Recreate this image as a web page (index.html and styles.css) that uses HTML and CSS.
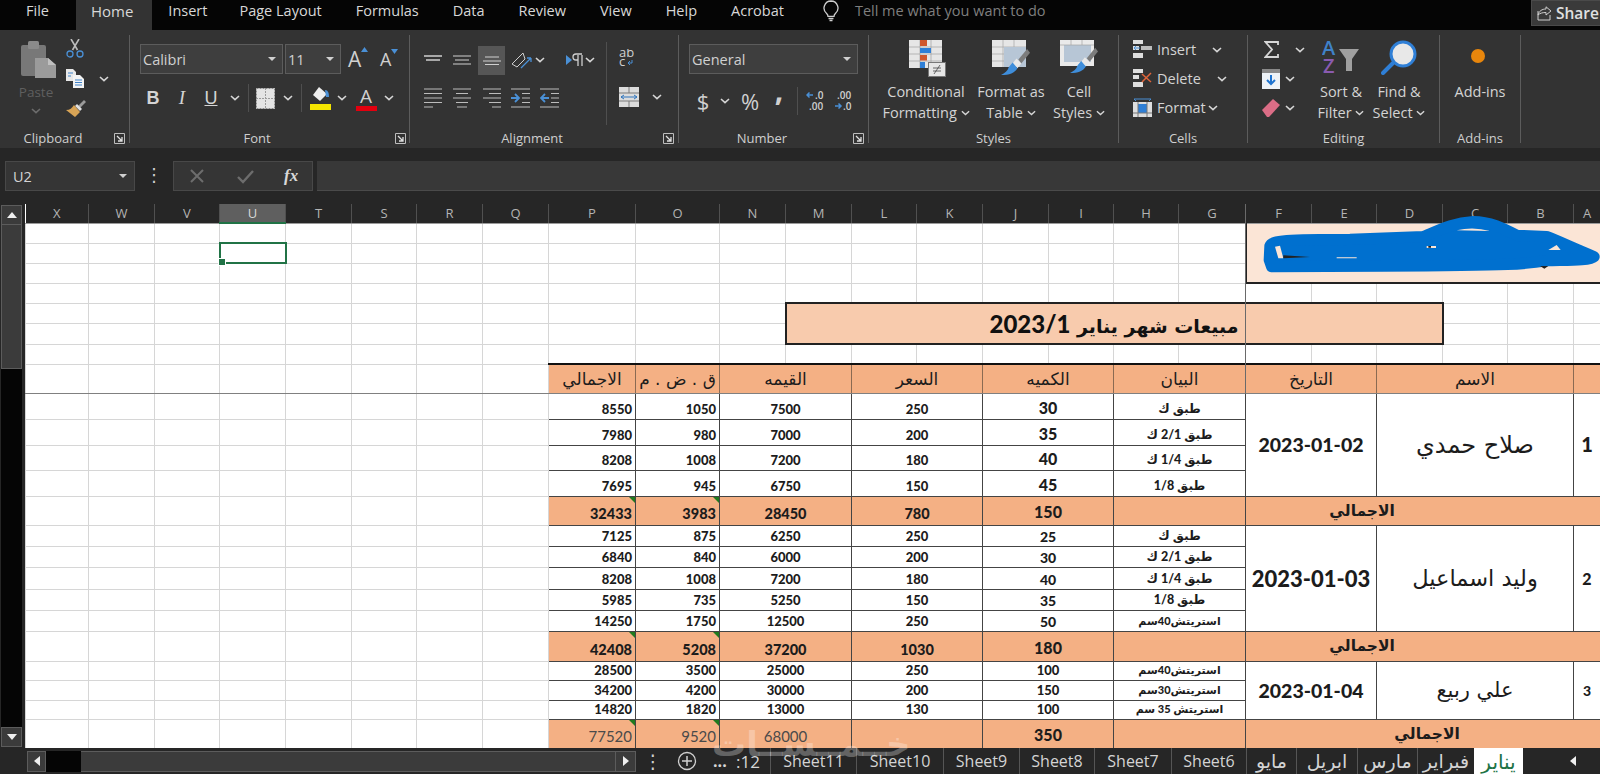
FILE: index.html
```html
<!DOCTYPE html>
<html lang="en">
<head>
<meta charset="utf-8">
<title>Excel</title>
<link rel="stylesheet" href="styles.css">
</head>
<body>
<svg class="defs" width="0" height="0" aria-hidden="true">
  <symbol id="chev" viewBox="0 0 10 6"><path d="M1 1l4 3.6L9 1" fill="none" stroke="#d6d6d6" stroke-width="1.6"/></symbol>
  <symbol id="launch" viewBox="0 0 11 11"><path d="M.5.5h10v10H.5z" fill="none" stroke="#bdbdbd"/><path d="M3 3l5 5M8 4v4H4" fill="none" stroke="#e0e0e0" stroke-width="1.3"/></symbol>
  <symbol id="brush" viewBox="0 0 30 30"><path d="M18 13l9-11 3 4-9 11z" fill="#7c7c7c"/><path d="M16 12l5 5-4 5-5-5z" fill="#e8e8e8"/><path d="M12 16l5 6c-3 5-8 7-17 7 4-2 7-4 8-8z" fill="#3f8edb"/></symbol>
</svg>
<div class="app">
  <header class="menubar">
    <nav class="menu">
      <span class="mi mi-file">File</span><span class="mi mi-home">Home</span><span class="mi mi-ins">Insert</span><span class="mi">Page Layout</span><span class="mi">Formulas</span><span class="mi">Data</span><span class="mi">Review</span><span class="mi">View</span><span class="mi">Help</span><span class="mi">Acrobat</span>
    </nav>
    <svg class="bulb" width="16" height="22" viewBox="0 0 16 22"><path d="M8 1a7 7 0 0 0-4.4 12.4c.9.8 1.4 1.7 1.4 3h6c0-1.300.5-2.200 1.400-3A7 7 0 0 0 8 1z" fill="none" stroke="#cfcfcf" stroke-width="1.300"/><path d="M5.500 18.500h5M6.500 20.500h3" stroke="#cfcfcf" stroke-width="1.300"/></svg>
    <span class="tell">Tell me what you want to do</span>
    <div class="share">
      <svg width="15" height="15" viewBox="0 0 15 15"><path d="M1 5v9h12V9M1 9c1-4 4-6 8-6V.8L14 5l-5 4V6.500C6 6.500 3 7 1 9z" fill="none" stroke="#cfcfcf"/></svg>
      <span>Share</span>
    </div>
  </header>

  <section class="ribbon">
    <div class="grp g-clip">
      <div class="body clip-body">
        <div class="paste">
          <svg width="35" height="37" viewBox="0 0 35 37"><rect y="4" width="25" height="31" rx="2" fill="#787878"/><rect x="7" width="11" height="8" rx="1.500" fill="#8a8a8a"/><path d="M14 17h13l8 7v13H14z" fill="#9b9b9b"/><path d="M27 17v7h8z" fill="#c0c0c0"/></svg>
          <span class="paste-t">Paste</span>
          <svg class="dim" width="10" height="6"><use href="#chev"/></svg>
        </div>
        <div class="clip-tools">
          <svg width="18" height="19" viewBox="0 0 18 19"><path d="M5 0l6.500 11M13 0L6.500 11" stroke="#bdbdbd" stroke-width="1.600"/><circle cx="4" cy="15" r="3" fill="none" stroke="#4a90d6" stroke-width="1.300"/><circle cx="14" cy="15" r="3" fill="none" stroke="#4a90d6" stroke-width="1.300"/></svg>
          <svg width="18" height="19" viewBox="0 0 18 19"><path d="M0 0h7l3 3v9H0z" fill="#e8e8e8"/><path d="M7 6h7l4 4v9H7z" fill="#f4f4f4"/><path d="M2 4h5M2 7h3M9 11h7M9 13.500h7M9 16h7" stroke="#3f82c9"/></svg>
          <svg width="20" height="18" viewBox="0 0 20 18"><path d="M12 7l6-6 2 2-6 6z" fill="#9a9a9a"/><path d="M11 5l5 5-2 2-5-5z" fill="#e0e0e0"/><path d="M8 6l6 7-5 5-9-7c4 0 6-2 8-5z" fill="#d8a456"/></svg>
        </div>
        <svg class="clip-chev" width="10" height="6"><use href="#chev"/></svg>
      </div>
      <div class="label"><span></span><span>Clipboard</span><svg width="11" height="11"><use href="#launch"/></svg></div>
    </div>
    <i class="sep"></i>

    <div class="grp g-font">
      <div class="body font-body">
        <div class="font-r1">
          <div class="combo c-font"><span>Calibri</span><b class="caret"></b></div>
          <div class="combo c-size"><span>11</span><b class="caret"></b></div>
          <span class="grow">A<svg width="7" height="5" viewBox="0 0 7 5"><path d="M0 5l3.500-5L7 5z" fill="#4a90d6"/></svg></span>
          <span class="shrink">A<svg width="7" height="5" viewBox="0 0 7 5"><path d="M0 0l3.500 5L7 0z" fill="#4a90d6"/></svg></span>
        </div>
        <div class="font-r2">
          <b class="tb">B</b><i class="tb it">I</i><u class="tb">U</u>
          <svg width="10" height="6"><use href="#chev"/></svg><i class="vsep"></i>
          <svg width="19" height="21" viewBox="0 0 19 21"><rect width="19" height="21" fill="#e4e4e4"/><path d="M9.500 0v21M0 10.500h19" stroke="#9a9a9a" stroke-dasharray="2 1"/><rect x=".5" y=".5" width="18" height="20" fill="none" stroke="#8a8a8a" stroke-dasharray="2 1"/></svg>
          <svg width="10" height="6"><use href="#chev"/></svg><i class="vsep"></i>
          <svg width="21" height="24" viewBox="0 0 21 24"><path d="M9 1l8 7-7 7-7-6z" fill="#eee"/><path d="M15 4c3 0 4 3 4 7h-3z" fill="#4a90d6"/><rect y="18" width="21" height="6" fill="#f4e500"/></svg>
          <svg width="10" height="6"><use href="#chev"/></svg>
          <span class="colora">A</span>
          <svg width="10" height="6"><use href="#chev"/></svg>
        </div>
      </div>
      <div class="label"><span></span><span>Font</span><svg width="11" height="11"><use href="#launch"/></svg></div>
    </div>
    <i class="sep"></i>

    <div class="grp g-align">
      <div class="body align-body">
        <div class="align-main">
          <div class="al-r1">
            <svg width="18" height="10" viewBox="0 0 18 10"><path d="M0 1h18M2 5h14" stroke="#cfcfcf" stroke-width="1.300"/></svg>
            <svg width="18" height="10" viewBox="0 0 18 10"><path d="M0 1h18M2 5h14M0 9h18" stroke="#cfcfcf" stroke-width="1.100"/></svg>
            <span class="al-on"><svg width="18" height="10" viewBox="0 0 18 10"><path d="M2 2h14M0 6h18M2 9.500h14" stroke="#cfcfcf" stroke-width="1.100"/></svg></span>
            <svg width="23" height="20" viewBox="0 0 23 20"><path d="M3 14L14 3l2 6-8 8z" fill="none" stroke="#cfcfcf"/><path d="M12 18L22 8M22 8h-4M22 8v4" fill="none" stroke="#4a90d6" stroke-width="1.300"/></svg>
            <svg width="10" height="6"><use href="#chev"/></svg>
            <svg class="rtl" width="20" height="16" viewBox="0 0 20 16"><path d="M0 3l6 5-6 5z" fill="#4a90d6"/><path d="M12 3v11M16 3v11M16 2h-6a3 3 0 0 0 0 6h2" fill="none" stroke="#cfcfcf" stroke-width="1.300"/></svg>
            <svg width="10" height="6"><use href="#chev"/></svg>
          </div>
          <div class="al-r2">
            <svg width="18" height="21" viewBox="0 0 18 21"><path d="M0 1h18M0 5.500h18M0 10h18M0 14.500h18M0 19h9" stroke="#bcbcbc" stroke-width="1.200"/></svg>
            <svg width="18" height="21" viewBox="0 0 18 21"><path d="M0 1h18M3 5.500h12M0 10h18M3 14.500h12M4 19h10" stroke="#bcbcbc" stroke-width="1.200"/></svg>
            <svg width="18" height="21" viewBox="0 0 18 21"><path d="M0 1h18M6 5.500h12M0 10h18M6 14.500h12M9 19h9" stroke="#bcbcbc" stroke-width="1.200"/></svg>
            <svg width="19" height="21" viewBox="0 0 19 21"><path d="M0 1h19M11 5.500h8M11 10h8M11 14.500h8M0 19h19" stroke="#bcbcbc" stroke-width="1.200"/><path d="M0 10h7M4 6l4 4-4 4" fill="none" stroke="#4a90d6" stroke-width="1.800"/></svg>
            <svg width="19" height="21" viewBox="0 0 19 21"><path d="M0 1h19M11 5.500h8M11 10h8M11 14.500h8M0 19h19" stroke="#bcbcbc" stroke-width="1.200"/><path d="M9 10H2M5 6l-4 4 4 4" fill="none" stroke="#4a90d6" stroke-width="1.800"/></svg>
          </div>
        </div>
        <i class="vsep tall"></i>
        <div class="align-side">
          <svg width="15" height="18" viewBox="0 0 15 18"><text x="0" y="8" class="svt">ab</text><text x="0" y="17" class="svt">c</text><path d="M13 11v3H9M11 12l-2 2 2 2" fill="none" stroke="#4a90d6"/></svg>
          <div class="merge">
            <svg width="20" height="20" viewBox="0 0 20 20"><rect width="20" height="20" fill="#dcdcdc"/><path d="M0 6h20M0 14h20M10 0v6M10 14v6" stroke="#7a7a7a"/><path d="M2 10h16M5 8l-3 2 3 2M15 8l3 2-3 2" fill="none" stroke="#2f75bd"/></svg>
            <svg width="10" height="6"><use href="#chev"/></svg>
          </div>
        </div>
      </div>
      <div class="label"><span></span><span>Alignment</span><svg width="11" height="11"><use href="#launch"/></svg></div>
    </div>
    <i class="sep"></i>

    <div class="grp g-num">
      <div class="body num-body">
        <div class="combo c-gen"><span>General</span><b class="caret"></b></div>
        <div class="num-r2">
          <span class="sym dollar">$</span>
          <svg width="10" height="6"><use href="#chev"/></svg>
          <span class="sym pct">%</span>
          <b class="sym comma">,</b>
          <i class="vsep"></i>
          <svg width="20" height="20" viewBox="0 0 20 20"><path d="M7 4H1M3.500 1.500L1 4l2.500 2.500" fill="none" stroke="#4a90d6" stroke-width="1.500"/><text x="9" y="8" class="svn">.0</text><text x="3" y="19" class="svn">.00</text></svg>
          <svg width="20" height="20" viewBox="0 0 20 20"><text x="3" y="8" class="svn">.00</text><path d="M1 15h6M4.500 12.500L7 15l-2.500 2.500" fill="none" stroke="#4a90d6" stroke-width="1.500"/><text x="9" y="19" class="svn">.0</text></svg>
        </div>
      </div>
      <div class="label"><span></span><span>Number</span><svg width="11" height="11"><use href="#launch"/></svg></div>
    </div>
    <i class="sep"></i>

    <div class="grp g-styles">
      <div class="body styles-body">
        <div class="big">
          <svg width="37" height="37" viewBox="0 0 37 37"><rect width="33" height="28" fill="#e6e6e6"/><path d="M11 0v28M22 0v28M0 7h33M0 14h33M0 21h33" stroke="#9e9e9e" stroke-width=".7"/><rect x="11" width="7" height="6" fill="#d0572c"/><rect x="11" y="8" width="11" height="5" fill="#2f7fd6"/><rect x="11" y="15" width="7" height="5.500" fill="#d0572c"/><rect x="11" y="22" width="5" height="6" fill="#2f7fd6"/><rect x="19.500" y="22.500" width="17" height="14" fill="#e6e6e6" stroke="#777"/><path d="M24 31h8M24 28h8M31 25l-6 9" stroke="#444" stroke-width=".8" fill="none"/></svg>
          <span class="big-t">Conditional<br>Formatting <svg width="9" height="6"><use href="#chev"/></svg></span>
        </div>
        <div class="big">
          <svg width="38" height="37" viewBox="0 0 38 37"><rect width="34" height="27" fill="#e6e6e6"/><path d="M11 0v27M22 0v27M0 7h34M0 14h34M0 21h34" stroke="#a5a5a5" stroke-width=".7"/><rect x="12" y="7" width="22" height="20" fill="#b7c6d6"/><use href="#brush" x="9" y="7" width="29" height="29"/></svg>
          <span class="big-t">Format as<br>Table <svg width="9" height="6"><use href="#chev"/></svg></span>
        </div>
        <div class="big">
          <svg width="38" height="37" viewBox="0 0 38 37"><rect width="34" height="26" fill="#eaeaea"/><rect x="4" y="5" width="27" height="17" fill="#b7c6d6"/><path d="M11 0v5M22 0v5M0 5h34" stroke="#a5a5a5" stroke-width=".7"/><use href="#brush" x="10" y="6" width="28" height="28"/></svg>
          <span class="big-t">Cell<br>Styles <svg width="9" height="6"><use href="#chev"/></svg></span>
        </div>
      </div>
      <div class="label l-plain"><span>Styles</span></div>
    </div>
    <i class="sep"></i>

    <div class="grp g-cells">
      <div class="body cells-body">
        <div class="crow c-in">
          <svg width="19" height="19" viewBox="0 0 19 19"><path d="M0 0h10v4H0zM0 6h6v4H0zM0 13h10v5H0z" fill="#dedede"/><path d="M8 6h11v4H8z" fill="#bcbcbc"/><path d="M7 8H1M3 6L1 8l2 2" fill="none" stroke="#4a90d6"/></svg>
          <span>Insert</span><svg width="10" height="6"><use href="#chev"/></svg>
        </div>
        <div class="crow c-de">
          <svg width="19" height="19" viewBox="0 0 19 19"><path d="M0 0h10v4H0zM0 6h6v4H0zM0 13h10v5H0z" fill="#dedede"/><path d="M9 5l9 8M18 4l-9 9" stroke="#e0643a" stroke-width="1.500"/></svg>
          <span>Delete</span><svg width="10" height="6"><use href="#chev"/></svg>
        </div>
        <div class="crow c-fo">
          <svg width="19" height="19" viewBox="0 0 19 19"><path d="M1 1h17M1 1l2 2M18 1l-2 2" stroke="#4a90d6" fill="none"/><rect y="4" width="19" height="15" fill="#dedede"/><rect x="5" y="6" width="9" height="9" fill="#2f7fd6"/><path d="M0 15h19M5 4v15M14 4v15" stroke="#777"/></svg>
          <span>Format</span><svg width="10" height="6"><use href="#chev"/></svg>
        </div>
      </div>
      <div class="label l-plain"><span>Cells</span></div>
    </div>
    <i class="sep"></i>

    <div class="grp g-edit">
      <div class="body edit-body">
        <div class="edit-left">
          <div class="erow e-sum"><svg width="15" height="17" viewBox="0 0 15 17"><path d="M14 4V1H1.500L8 8.500 1.500 16H14v-3" fill="none" stroke="#d6d6d6" stroke-width="1.800"/></svg><svg width="10" height="6"><use href="#chev"/></svg></div>
          <div class="erow"><svg width="18" height="20" viewBox="0 0 18 20"><rect width="18" height="20" fill="#eef3f8"/><rect width="18" height="4" fill="#8a8a8a"/><path d="M9 6v9M5 11l4 4 4-4" fill="none" stroke="#1f74d0" stroke-width="2"/></svg><svg width="10" height="6"><use href="#chev"/></svg></div>
          <div class="erow"><svg width="18" height="18" viewBox="0 0 18 18"><path d="M0 11L11 0l7 6L7 18H5z" fill="#db6d86"/></svg><svg width="10" height="6"><use href="#chev"/></svg></div>
        </div>
        <div class="big b-sort">
          <svg width="38" height="34" viewBox="0 0 38 34"><text x="0" y="15" class="sv-a">A</text><text x="1" y="33" class="sv-z">Z</text><path d="M17 9h20l-7 10v12h-6V19z" fill="#a0a0a0"/></svg>
          <span class="big-t">Sort &amp;<br>Filter <svg width="9" height="6"><use href="#chev"/></svg></span>
        </div>
        <div class="big b-find">
          <svg width="36" height="35" viewBox="0 0 36 35"><circle cx="22" cy="14" r="12" fill="#e8e8e8" stroke="#2f7fd6" stroke-width="3"/><path d="M12 23L2 33" stroke="#2f7fd6" stroke-width="4" stroke-linecap="round"/></svg>
          <span class="big-t">Find &amp;<br>Select <svg width="9" height="6"><use href="#chev"/></svg></span>
        </div>
      </div>
      <div class="label l-plain"><span>Editing</span></div>
    </div>
    <i class="sep"></i>

    <div class="grp g-add">
      <div class="body add-body">
        <i class="dot"></i>
        <span class="big-t">Add-ins</span>
      </div>
      <div class="label l-plain"><span>Add-ins</span></div>
    </div>
    <i class="sep"></i>
  </section>

  <section class="formula">
    <div class="namebox"><span>U2</span><b class="caret"></b></div>
    <span class="dots">⋮</span>
    <div class="fx">
      <svg width="16" height="16" viewBox="0 0 16 16"><path d="M2 2l12 12M14 2L2 14" stroke="#6d6d6d" stroke-width="2"/></svg>
      <svg width="17" height="15" viewBox="0 0 17 15"><path d="M1 8l5 5L16 2" fill="none" stroke="#6d6d6d" stroke-width="2.400"/></svg>
      <i class="fx-t">fx</i>
    </div>
    <div class="fbar"></div>
  </section>

  <section class="sheet">
    <aside class="vscroll">
      <span class="sbtn"><i class="tri-up"></i></span>
      <span class="thumb"></span>
      <span class="track"></span>
      <span class="sbtn"><i class="tri-down"></i></span>
    </aside>
    <div class="gridwrap">
      <table class="grid">
        <colgroup><col class="c63"><col class="c66"><col class="c65"><col class="c66"><col class="c66"><col class="c65"><col class="c66"><col class="c66"><col class="c87"><col class="c84"><col class="c66"><col class="c66"><col class="c65"><col class="c66"><col class="c66"><col class="c65"><col class="c65"><col class="c67"><col class="c66"><col class="c65"><col class="c66"><col class="c65"><col class="c66"><col class="c27"></colgroup>
        <thead>
          <tr class="hd"><th>X</th><th>W</th><th>V</th><th class="cur">U</th><th>T</th><th>S</th><th>R</th><th>Q</th><th>P</th><th>O</th><th>N</th><th>M</th><th>L</th><th>K</th><th>J</th><th>I</th><th>H</th><th>G</th><th>F</th><th>E</th><th>D</th><th>C</th><th>B</th><th>A</th></tr>
        </thead>
        <tbody>
          <tr class="h20"><td></td><td></td><td></td><td></td><td></td><td></td><td></td><td></td><td></td><td></td><td></td><td></td><td></td><td></td><td></td><td></td><td></td><td></td><td class="box" colspan="6" rowspan="3"></td></tr>
          <tr class="h20"><td></td><td></td><td></td><td class="sel"></td><td></td><td></td><td></td><td></td><td></td><td></td><td></td><td></td><td></td><td></td><td></td><td></td><td></td><td></td></tr>
          <tr class="h20"><td></td><td></td><td></td><td></td><td></td><td></td><td></td><td></td><td></td><td></td><td></td><td></td><td></td><td></td><td></td><td></td><td></td><td></td></tr>
          <tr class="h20"><td></td><td></td><td></td><td></td><td></td><td></td><td></td><td></td><td></td><td></td><td></td><td></td><td></td><td></td><td></td><td></td><td></td><td></td><td></td><td></td><td></td><td></td><td></td><td></td></tr>
          <tr class="h20"><td></td><td></td><td></td><td></td><td></td><td></td><td></td><td></td><td></td><td></td><td></td><td class="title" colspan="10" rowspan="2" dir="rtl">مبيعات شهر يناير <span class="tnum">2023/1</span></td><td></td><td></td><td></td></tr>
          <tr class="h21"><td></td><td></td><td></td><td></td><td></td><td></td><td></td><td></td><td></td><td></td><td></td><td></td><td></td><td></td></tr>
          <tr class="h20"><td></td><td></td><td></td><td></td><td></td><td></td><td></td><td></td><td></td><td></td><td></td><td></td><td></td><td></td><td></td><td></td><td></td><td></td><td></td><td></td><td></td><td></td><td></td><td></td></tr>
          <tr class="h29 th"><td></td><td></td><td></td><td></td><td></td><td></td><td></td><td></td><td class="t-l" dir="rtl">الاجمالي</td><td dir="rtl">ق . ض . م</td><td colspan="2">القيمه</td><td colspan="2">السعر</td><td colspan="2">الكميه</td><td colspan="2">البيان</td><td colspan="2">التاريخ</td><td colspan="3">الاسم</td><td></td></tr>

          <tr class="h26 d"><td></td><td></td><td></td><td></td><td></td><td></td><td></td><td></td><td class="r t-l">8550</td><td class="r">1050</td><td colspan="2">7500</td><td colspan="2">250</td><td colspan="2" class="q16">30</td><td colspan="2" class="ar" dir="rtl">طبق  ك</td><td colspan="2" rowspan="4" class="date">2023-01-02</td><td colspan="3" rowspan="4" class="name n1" dir="rtl">صلاح حمدي</td><td rowspan="4" class="idx i1">1</td></tr>
          <tr class="h26 d"><td></td><td></td><td></td><td></td><td></td><td></td><td></td><td></td><td class="r t-l">7980</td><td class="r">980</td><td colspan="2">7000</td><td colspan="2">200</td><td colspan="2" class="q16">35</td><td colspan="2" class="ar" dir="rtl">طبق 2/1 ك</td></tr>
          <tr class="h25 d"><td></td><td></td><td></td><td></td><td></td><td></td><td></td><td></td><td class="r t-l">8208</td><td class="r">1008</td><td colspan="2">7200</td><td colspan="2">180</td><td colspan="2" class="q16">40</td><td colspan="2" class="ar" dir="rtl">طبق 1/4 ك</td></tr>
          <tr class="h26 d"><td></td><td></td><td></td><td></td><td></td><td></td><td></td><td></td><td class="r t-l">7695</td><td class="r">945</td><td colspan="2">6750</td><td colspan="2">150</td><td colspan="2" class="q16">45</td><td colspan="2" class="ar" dir="rtl">طبق 1/8</td></tr>
          <tr class="h29 tot"><td></td><td></td><td></td><td></td><td></td><td></td><td></td><td></td><td class="r t-l flag">32433</td><td class="r flag">3983</td><td colspan="2">28450</td><td colspan="2">780</td><td colspan="2" class="q16">150</td><td colspan="2"></td><td colspan="6" class="tlabel tl-off" dir="rtl">الاجمالي</td></tr>

          <tr class="h21 d"><td></td><td></td><td></td><td></td><td></td><td></td><td></td><td></td><td class="r t-l">7125</td><td class="r">875</td><td colspan="2">6250</td><td colspan="2">250</td><td colspan="2" class="q14">25</td><td colspan="2" class="ar" dir="rtl">طبق  ك</td><td colspan="2" rowspan="5" class="date dbig">2023-01-03</td><td colspan="3" rowspan="5" class="name n2" dir="rtl">وليد اسماعيل</td><td rowspan="5" class="idx">2</td></tr>
          <tr class="h21 d"><td></td><td></td><td></td><td></td><td></td><td></td><td></td><td></td><td class="r t-l">6840</td><td class="r">840</td><td colspan="2">6000</td><td colspan="2">200</td><td colspan="2" class="q14">30</td><td colspan="2" class="ar" dir="rtl">طبق 2/1 ك</td></tr>
          <tr class="h22 d"><td></td><td></td><td></td><td></td><td></td><td></td><td></td><td></td><td class="r t-l">8208</td><td class="r">1008</td><td colspan="2">7200</td><td colspan="2">180</td><td colspan="2" class="q14">40</td><td colspan="2" class="ar" dir="rtl">طبق 1/4 ك</td></tr>
          <tr class="h21 d"><td></td><td></td><td></td><td></td><td></td><td></td><td></td><td></td><td class="r t-l">5985</td><td class="r">735</td><td colspan="2">5250</td><td colspan="2">150</td><td colspan="2" class="q14">35</td><td colspan="2" class="ar" dir="rtl">طبق 1/8</td></tr>
          <tr class="h21 d"><td></td><td></td><td></td><td></td><td></td><td></td><td></td><td></td><td class="r t-l">14250</td><td class="r">1750</td><td colspan="2">12500</td><td colspan="2">250</td><td colspan="2" class="q14">50</td><td colspan="2" class="ar as" dir="rtl">استريتش40سم</td></tr>
          <tr class="h30 tot"><td></td><td></td><td></td><td></td><td></td><td></td><td></td><td></td><td class="r t-l flag">42408</td><td class="r flag">5208</td><td colspan="2">37200</td><td colspan="2">1030</td><td colspan="2" class="q16">180</td><td colspan="2"></td><td colspan="6" class="tlabel tl-off" dir="rtl">الاجمالي</td></tr>

          <tr class="h19 d"><td></td><td></td><td></td><td></td><td></td><td></td><td></td><td></td><td class="r t-l">28500</td><td class="r">3500</td><td colspan="2">25000</td><td colspan="2">250</td><td colspan="2">100</td><td colspan="2" class="ar as" dir="rtl">استريتش40سم</td><td colspan="2" rowspan="3" class="date">2023-01-04</td><td colspan="3" rowspan="3" class="name n3" dir="rtl">علي ربيع</td><td rowspan="3" class="idx i3">3</td></tr>
          <tr class="h20 d"><td></td><td></td><td></td><td></td><td></td><td></td><td></td><td></td><td class="r t-l">34200</td><td class="r">4200</td><td colspan="2">30000</td><td colspan="2">200</td><td colspan="2">150</td><td colspan="2" class="ar as" dir="rtl">استريتش30سم</td></tr>
          <tr class="h19 d"><td></td><td></td><td></td><td></td><td></td><td></td><td></td><td></td><td class="r t-l">14820</td><td class="r">1820</td><td colspan="2">13000</td><td colspan="2">130</td><td colspan="2">100</td><td colspan="2" class="ar as" dir="rtl">استريتش 35 سم</td></tr>
          <tr class="h29 tot last"><td></td><td></td><td></td><td></td><td></td><td></td><td></td><td></td><td class="r t-l flag lite">77520</td><td class="r flag lite">9520</td><td colspan="2" class="lite">68000</td><td colspan="2"></td><td colspan="2" class="q16">350</td><td colspan="2"></td><td colspan="6" class="tlabel" dir="rtl">الاجمالي</td></tr>
        </tbody>
      </table>
    </div>
    <i class="freeze-h"></i>
    <i class="freeze-v"></i>
    <svg class="scribble" width="500" height="200" viewBox="0 0 1500 600">
      <path d="M510 108C515 92 560 88 750 88L970 80C1010 65 1050 40 1120 35 1170 35 1210 55 1250 76L1340 80C1380 95 1420 115 1482 140 1470 152 1400 150 1340 152 1280 162 1250 166 850 168L515 170 508 150z" fill="#0070cf" stroke="#0070cf" stroke-width="34" stroke-linejoin="round"/>
      <path d="M525 110l15-3 10 38-15 0zM1070 61q50-12 100 2zM1345 120l25-15 12 15zM980 108h28v6h-28zM710 142h60v3h-60z" fill="#fbe5d6"/>
      <path d="M550 136l80 5-80 4zM985 108h8v5h-8zM1320 168h25l-12 8z" fill="#222"/>
    </svg>
    <span class="watermark" dir="rtl">خــمــســات</span>
  </section>

  <footer class="bottom">
    <span class="hbtn"><i class="tri-left"></i></span>
    <span class="hblack"></span>
    <span class="htrack"></span>
    <span class="hbtn hbtn-r"><i class="tri-right"></i></span>
    <span class="dots dots-b">⋮</span>
    <svg class="plus" width="20" height="20" viewBox="0 0 20 20"><circle cx="10" cy="10" r="8.500" fill="none" stroke="#d0d0d0" stroke-width="1.300"/><path d="M10 5v10M5 10h10" stroke="#d0d0d0" stroke-width="1.500"/></svg>
    <span class="more">...</span>
    <span class="trunc">:12</span>
    <div class="tabs">
      <span>Sheet11</span><span>Sheet10</span><span>Sheet9</span><span>Sheet8</span><span>Sheet7</span><span>Sheet6</span><span class="ta" dir="rtl">مايو</span><span class="ta" dir="rtl">ابريل</span><span class="ta" dir="rtl">مارس</span><span class="ta" dir="rtl">فبراير</span><span class="ta active" dir="rtl">يناير</span>
    </div>
    <i class="tri-left tab-arrow"></i>
  </footer>
</div>
</body>
</html>
```
FILE: styles.css
```css
* { box-sizing: border-box; }
html, body { margin: 0; height: 100%; overflow: hidden; background: #262626; }
body { font-family: "Open Sans", "DejaVu Sans", sans-serif; color: #d6d6d6; }
.defs { position: absolute; }
i { font-style: normal; }
svg { display: block; flex: none; }
.app { width: 1600px; height: 774px; display: flex; flex-direction: column; overflow: hidden; }

/* menu bar */
.menubar { height: 30px; background: #050505; display: flex; align-items: flex-start; }
.menu { display: flex; padding-left: 9px; }
.mi { padding: 0 17px; height: 30px; line-height: 22px; font-size: 14.500px; color: #d8d8d8; white-space: nowrap; }
.mi-file { margin-right: 10px; }
.mi-home { background: #333; padding: 0 19px 0 15px; font-size: 15px; }
.mi-ins { padding: 0 15px 0 16px; }
.bulb { margin: 0 0 0 22px; }
.tell { margin-left: 16px; line-height: 22px; font-size: 14.500px; color: #7f7f7f; white-space: nowrap; }
.share { margin-left: auto; width: 69px; height: 26px; background: #3a3a3a; border: 1px solid #4a4a4a; border-right: 0; display: flex; align-items: center; gap: 4px; padding-left: 5px; font-size: 15.500px; font-weight: 600; color: #e0e0e0; overflow: hidden; }

/* ribbon */
.ribbon { height: 118px; background: #333; display: flex; padding-top: 5px; font-size: 14px; }
.grp { display: flex; flex-direction: column; height: 113px; }
.sep { width: 1px; height: 108px; background: #5c5c5c; flex: none; }
.g-clip { width: 129px; } .g-font { width: 279px; } .g-align { width: 268px; } .g-num { width: 189px; }
.g-styles { width: 249px; } .g-cells { width: 128px; } .g-edit { width: 191px; } .g-add { width: 80px; }
.body { flex: 1; min-height: 0; }
.label { height: 20px; display: grid; align-items: center; padding-right: 4px; font-size: 13px; color: #cfcfcf; }
.label svg { justify-self: end; }
.l-plain { display: flex; justify-content: center; padding: 0; }
.g-clip .label { grid-template-columns: 0 106px 1fr; justify-items: center; }
.g-font .label { grid-template-columns: 112px 30px 1fr; justify-items: center; padding-right: 3px; }
.g-align .label { grid-template-columns: 92px 60px 1fr; justify-items: center; }
.g-num .label { grid-template-columns: 58px 50px 1fr; justify-items: center; }
.caret { width: 0; height: 0; border: 4px solid transparent; border-top: 4px solid #d0d0d0; border-bottom: 0; }
.combo { height: 30px; background: #3e3e3e; border: 1px solid #5c5c5c; display: flex; align-items: center; justify-content: space-between; padding: 0 6px 0 2px; font-size: 14.500px; color: #d0d0d0; }
.vsep { width: 1px; height: 28px; background: #4f4f4f; }

.clip-body { display: flex; padding-left: 21px; }
.paste { width: 35px; padding-top: 6px; display: flex; flex-direction: column; align-items: center; }
.paste-t { margin: 5px 5px 0 0; font-size: 13.500px; line-height: 18px; color: #5f5f5f; }
.dim { margin: 7px 5px 0 0; opacity: .35; }
.clip-tools { margin-left: 10px; padding-top: 4px; display: flex; flex-direction: column; gap: 11px; }
.clip-chev { margin: 41px 0 0 13px; }

.font-body { padding: 9px 0 0 10px; }
.font-r1 { display: flex; align-items: center; }
.c-font { width: 143px; }
.c-size { width: 56px; margin-left: 2px; }
.grow, .shrink { display: flex; align-items: flex-start; color: #d0d0d0; }
.grow { font-size: 21px; margin-left: 7px; width: 27px; }
.shrink { font-size: 18px; margin-left: 5px; }
.grow svg, .shrink svg { margin: 2px 0 0 0; }
.font-r2 { display: grid; grid-template-columns: 28px 30px 28px 19px 8px 26px 20px 6px 32px 12px 36px 10px; justify-items: center; align-items: center; height: 28px; margin: 10px 0 0 -1px; }
.tb { font-size: 18px; line-height: 24px; color: #d4d4d4; font-family: "Liberation Sans", sans-serif; }
.it { font-style: italic; font-family: "Liberation Serif", serif; font-size: 19px; }
u.tb { font-weight: 400; }
.colora { font-size: 19px; line-height: 20px; color: #d0d0d0; width: 21px; text-align: center; border-bottom: 5px solid #e2000f; }

.align-body { display: flex; }
.align-main { width: 187px; margin-left: 9px; padding-top: 10px; }
.al-r1 { display: grid; grid-template-columns: 28px 30px 29px 28px 12px 40px 8px; justify-items: center; align-items: center; height: 30px; }
.al-r1 .rtl { justify-self: end; }
.al-on { width: 27px; height: 29px; background: #565656; display: flex; align-items: center; justify-content: center; }
.al-r2 { display: grid; grid-template-columns: 28px 30px 29px 29px 29px; justify-items: center; align-items: center; margin-top: 13px; }
.align-side { margin-left: 9px; padding-top: 14px; }
.align-side svg:first-child { margin-left: 3px; }
.merge { display: flex; align-items: center; gap: 13px; margin-top: 20px; }
.svt { font: 13px "Open Sans", sans-serif; fill: #d0d0d0; }
.svn { font: 600 10px "Open Sans", sans-serif; fill: #d0d0d0; }
.vsep.tall { margin-top: 7px; height: 83px; }

.num-body { padding: 9px 0 0 10px; }
.c-gen { width: 169px; }
.num-r2 { display: grid; grid-template-columns: 28px 16px 34px 24px 12px 26px 30px; justify-items: center; align-items: center; height: 28px; margin-top: 10px; }
.sym { font-size: 22px; line-height: 28px; color: #d0d0d0; }
.comma { font-size: 30px; line-height: 12px; height: 34px; }

.styles-body { display: grid; grid-template-columns: 100px 70px 66px; padding-left: 7px; }
.big { display: flex; flex-direction: column; align-items: center; padding-top: 5px; }
.big-t { display: block; margin-top: 5px; font-size: 14.500px; line-height: 20.500px; text-align: center; white-space: nowrap; color: #d4d4d4; }
.big-t svg { display: inline-block; vertical-align: 2px; }
.big:nth-child(1) svg:first-child { margin-left: 3px; }

.cells-body { padding-left: 14px; }
.crow { height: 29px; display: grid; align-items: center; font-size: 14.500px; color: #d4d4d4; }
.c-in { grid-template-columns: 24px 60px 10px; justify-items: start; }
.c-de { grid-template-columns: 24px 65px 10px; }
.c-fo { grid-template-columns: 24px 56px 10px; }
.crow svg:last-child { margin-left: -5px; }

.edit-body { display: grid; grid-template-columns: 62px 62px 54px; }
.edit-left { padding-left: 14px; }
.erow { height: 29px; display: flex; align-items: center; gap: 5px; }
.e-sum { gap: 16px; padding-left: 2px; }
.sv-a { font: 600 20px "Open Sans", sans-serif; fill: #3f82c9; }
.sv-z { font: 600 20px "Open Sans", sans-serif; fill: #8a5bb0; }
.b-sort svg:first-child { margin-bottom: 3px; }
.b-find svg:first-child { margin-bottom: 2px; }

.add-body { display: flex; flex-direction: column; align-items: center; }
.dot { width: 14px; height: 14px; border-radius: 50%; background: #e8860c; margin: 14px 4px 0 0; }
.add-body .big-t { margin-top: 19px; }

/* formula bar */
.formula { height: 43px; background: #262626; padding: 13px 0 0 5px; display: flex; align-items: flex-start; }
.namebox { width: 130px; height: 30px; background: #353535; border: 1px solid #484848; display: flex; align-items: center; justify-content: space-between; padding: 0 7px; font-size: 14.500px; color: #d4d4d4; }
.dots { width: 38px; text-align: center; font-size: 18px; line-height: 28px; color: #d0d0d0; font-family: "DejaVu Sans", sans-serif; }
.fx { width: 140px; height: 30px; background: #353535; border: 1px solid #484848; display: flex; align-items: center; padding-left: 15px; gap: 32px; }
.fx-t { font: italic 700 17px "Liberation Serif", serif; color: #d8d8d8; margin-left: -2px; }
.fbar { flex: 1; height: 30px; margin-left: 4px; background: #383838; border-bottom: 1px solid #4a4a4a; }

/* sheet */
.sheet { position: relative; height: 557px; padding-top: 13px; display: flex; background: #262626; }
.vscroll { width: 25px; padding: 1px 3px 1px 1px; display: flex; flex-direction: column; flex: none; }
.sbtn { height: 20px; background: #3b3b3b; border: 1px solid #5c5c5c; display: flex; align-items: center; justify-content: center; flex: none; }
.thumb { height: 144px; background: #3b3b3b; border: 1px solid #5c5c5c; border-top: 0; flex: none; }
.track { flex: 1; background: #050505; }
.tri-up { border: 5px solid transparent; border-bottom: 6px solid #f0f0f0; border-top: 0; }
.tri-down { border: 5px solid transparent; border-top: 6px solid #f0f0f0; border-bottom: 0; }
.tri-left { border: 5px solid transparent; border-right: 6px solid #f0f0f0; border-left: 0; }
.tri-right { border: 5px solid transparent; border-left: 6px solid #f0f0f0; border-right: 0; }
.gridwrap { flex: 1; overflow: hidden; height: 544px; background: #fff; }
.grid { border-collapse: collapse; table-layout: fixed; width: 1575px; font-family: "Lato", "DejaVu Sans", sans-serif; color: #1c1c1c; }
.c63 { width: 63px; } .c65 { width: 65px; } .c66 { width: 66px; } .c67 { width: 67px; }
.c84 { width: 84px; } .c87 { width: 87px; } .c27 { width: 27px; }
.grid td { padding: 0; border: 1px solid #d6d6d6; }
.hd { height: 19px; background: #262626; }
.hd th { padding: 0; font: 400 13px "Open Sans", sans-serif; color: #b4b4b4; background: #262626; border: 0; border-right: 1px solid #505050; border-bottom: 1px solid #9a9a9a; }
.hd th.cur { background: #5f5f5f; color: #d8d8d8; border-bottom: 2px solid #217346; }
.h19 { height: 19px; } .h20 { height: 20px; } .h21 { height: 21px; } .h22 { height: 22px; }
.h25 { height: 25px; } .h26 { height: 26px; } .h29 { height: 29px; } .h30 { height: 30px; }
.grid td.sel { position: relative; outline: 2px solid #217346; outline-offset: -1px; }
.sel::after { content: ""; position: absolute; left: -2px; bottom: -3px; width: 6px; height: 6px; background: #217346; border: 1px solid #fff; }
.grid td.box { background: #fbe5d6; border: 0; border-left: 2px solid #222; border-bottom: 2px solid #222; }
.grid td.title { background: #f8cbad; border: 2px solid #222; text-align: center; font: 700 19px "DejaVu Sans", sans-serif; color: #111; white-space: nowrap; }
.tnum { font: 900 24px "Lato", sans-serif; }
.th td:nth-child(n+9) { background: #f4b084; border-color: #8a6a52; border-top: 2px solid #111; text-align: center; font: 400 17px "DejaVu Sans", sans-serif; white-space: nowrap; overflow: hidden; }
.grid td.t-l { border-left: 1px solid #333; }
.d td:nth-child(n+9), .tot td:nth-child(n+9) { border-color: #444; text-align: center; vertical-align: bottom; padding-bottom: 2px; font-size: 13px; font-weight: 900; line-height: 15px; }
.tot td:nth-child(n+9) { background: #f4b084; padding-bottom: 4px; font-size: 14.500px; }
.grid td.r { text-align: right; padding-right: 3px; }
.grid td.q16 { font-size: 16px; line-height: 18px; }
.grid td.q14 { font-size: 14px; }
.grid td.ar { font: 900 12.500px "Lato", "DejaVu Sans", sans-serif; white-space: nowrap; overflow: hidden; padding-bottom: 3px; }
.grid td.as { font-size: 11px; }
.grid td.date { font-size: 19.500px; vertical-align: middle; padding: 0; background: #fff; }
.grid td.dbig { font-size: 22px; }
.grid td.name { font: 400 24px "DejaVu Sans", sans-serif; vertical-align: middle; padding: 0; white-space: nowrap; }
.grid td.n2 { font-size: 22.500px; }
.grid td.n3 { font-size: 21px; }
.grid td.idx { vertical-align: middle; padding: 0; font-size: 16px; }
.grid td.i1 { font-size: 20px; }
.grid td.i3 { font-size: 14px; }
.grid td.tlabel { font: 700 15.500px "DejaVu Sans", sans-serif; vertical-align: middle; padding: 0 0 0 8px; white-space: nowrap; }
.grid td.tl-off { padding: 0 122px 0 0; text-align: center; }
.grid td.lite { font-weight: 400; color: #4a4a4a; font-size: 15px; }
.grid td.flag { position: relative; }
.flag::after { content: ""; position: absolute; top: 0; right: 0; border-top: 6px solid #1f7a1f; border-left: 6px solid transparent; }
.freeze-h { position: absolute; left: 25px; right: 0; top: 202px; height: 1px; background: #808080; }
.freeze-v { position: absolute; left: 1245px; top: 13px; height: 190px; width: 1px; background: #6a6a6a; }
.scribble { position: absolute; left: 1100px; top: 19px; }
.watermark { position: absolute; left: 712px; top: 531px; font: 700 34px "DejaVu Sans", sans-serif; color: rgba(255,255,255,.28); white-space: nowrap; line-height: 44px; }

/* bottom */
.bottom { height: 26px; background: #262626; display: flex; align-items: center; padding-left: 27px; }
.hbtn { width: 19px; height: 21px; background: #3b3b3b; border: 1px solid #5c5c5c; display: flex; align-items: center; justify-content: center; flex: none; }
.hbtn-r { width: 21px; }
.hblack { width: 35px; height: 21px; background: #050505; }
.htrack { width: 534px; height: 21px; background: #3b3b3b; border-top: 1px solid #5c5c5c; border-bottom: 1px solid #5c5c5c; }
.dots-b { width: 34px; font-size: 19px; }
.plus { margin-left: 7px; }
.more { margin-left: 16px; width: 18px; font-weight: 700; font-size: 16px; line-height: 18px; }
.trunc { width: 39px; padding-left: 5px; font-size: 17px; }
.tabs { display: grid; grid-template-columns: 86px 87px 76px 75px 77px 75px 50px 61px 60px 57px 49px; height: 26px; }
.tabs span { display: flex; align-items: center; justify-content: center; font-size: 16px; color: #d4d4d4; border-left: 1px solid #555; height: 26px; white-space: nowrap; }
.tabs span.ta { font-size: 19px; }
.tabs span.active { background: #fff; color: #217346; font-size: 20px; border: 0; }
.tab-arrow { margin-left: 47px; }
```
